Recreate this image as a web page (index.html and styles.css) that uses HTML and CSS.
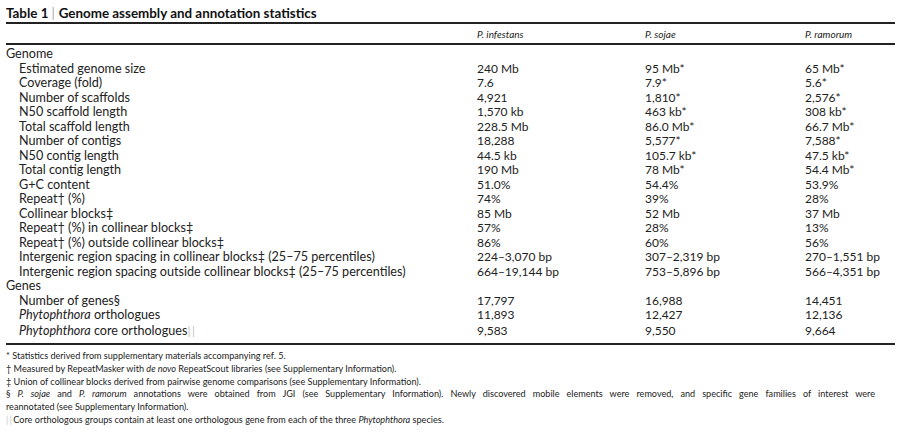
FILE: index.html
```html
<!DOCTYPE html>
<html>
<head>
<meta charset="utf-8">
<link rel="stylesheet" href="styles.css">
</head>
<body>
<div class="page">
  <h1 class="title">Table 1<span class="sep">|</span>Genome assembly and annotation statistics</h1>
  <table class="stats">
    <colgroup>
      <col class="c-label"><col class="c-a"><col class="c-b"><col class="c-c">
    </colgroup>
    <thead>
      <tr><th></th><th>P. infestans</th><th>P. sojae</th><th>P. ramorum</th></tr>
    </thead>
    <tbody>
      <tr class="group first"><td>Genome</td><td></td><td></td><td></td></tr>
      <tr><td class="sub">Estimated genome size</td><td>240 Mb</td><td>95 Mb*</td><td>65 Mb*</td></tr>
      <tr><td class="sub">Coverage (fold)</td><td>7.6</td><td>7.9*</td><td>5.6*</td></tr>
      <tr><td class="sub">Number of scaffolds</td><td>4,921</td><td>1,810*</td><td>2,576*</td></tr>
      <tr><td class="sub">N50 scaffold length</td><td>1,570 kb</td><td>463 kb*</td><td>308 kb*</td></tr>
      <tr><td class="sub">Total scaffold length</td><td>228.5 Mb</td><td>86.0 Mb*</td><td>66.7 Mb*</td></tr>
      <tr><td class="sub">Number of contigs</td><td>18,288</td><td>5,577*</td><td>7,588*</td></tr>
      <tr><td class="sub">N50 contig length</td><td>44.5 kb</td><td>105.7 kb*</td><td>47.5 kb*</td></tr>
      <tr><td class="sub">Total contig length</td><td>190 Mb</td><td>78 Mb*</td><td>54.4 Mb*</td></tr>
      <tr><td class="sub">G+C content</td><td>51.0%</td><td>54.4%</td><td>53.9%</td></tr>
      <tr><td class="sub">Repeat† (%)</td><td>74%</td><td>39%</td><td>28%</td></tr>
      <tr><td class="sub">Collinear blocks‡</td><td>85 Mb</td><td>52 Mb</td><td>37 Mb</td></tr>
      <tr><td class="sub">Repeat† (%) in collinear blocks‡</td><td>57%</td><td>28%</td><td>13%</td></tr>
      <tr><td class="sub">Repeat† (%) outside collinear blocks‡</td><td>86%</td><td>60%</td><td>56%</td></tr>
      <tr><td class="sub">Intergenic region spacing in collinear blocks‡ (25–75 percentiles)</td><td>224–3,070 bp</td><td>307–2,319 bp</td><td>270–1,551 bp</td></tr>
      <tr><td class="sub">Intergenic region spacing outside collinear blocks‡ (25–75 percentiles)</td><td>664–19,144 bp</td><td>753–5,896 bp</td><td>566–4,351 bp</td></tr>
      <tr class="group"><td>Genes</td><td></td><td></td><td></td></tr>
      <tr><td class="sub">Number of genes§</td><td>17,797</td><td>16,988</td><td>14,451</td></tr>
      <tr><td class="sub"><i>Phytophthora</i> orthologues</td><td>11,893</td><td>12,427</td><td>12,136</td></tr>
      <tr class="last"><td class="sub"><i>Phytophthora</i> core orthologues<span class="bars">||</span></td><td>9,583</td><td>9,550</td><td>9,664</td></tr>
    </tbody>
  </table>
  <div class="notes">
    <p>* Statistics derived from supplementary materials accompanying ref. 5.</p>
    <p>† Measured by RepeatMasker with <i>de novo</i> RepeatScout libraries (see Supplementary Information).</p>
    <p>‡ Union of collinear blocks derived from pairwise genome comparisons (see Supplementary Information).</p>
    <p><span class="just">§ <i>P. sojae</i> and <i>P. ramorum</i> annotations were obtained from JGI (see Supplementary Information).  Newly discovered mobile elements were removed, and specific gene families of interest were</span> reannotated (see Supplementary Information).</p>
    <p><span class="bars">||</span>Core orthologous groups contain at least one orthologous gene from each of the three <i>Phytophthora</i> species.</p>
  </div>
</div>
</body>
</html>
```

FILE: styles.css
```css
html, body {
  margin: 0;
  padding: 0;
  background: #ffffff;
}
body {
  font-family: Lato, "Open Sans", "Liberation Sans", sans-serif;
  color: #222222;
}
.page {
  padding: 5px 5px 0 6px;
  width: 889px;
}
.title {
  margin: 0;
  font-size: 13.4px;
  font-weight: 700;
  line-height: 17px;
  color: #111111;
  border-bottom: 2px solid #222222;
}
.title .sep {
  font-weight: 300;
  color: #555555;
  margin: 0 4px 0 3px;
}
.stats {
  width: 889px;
  border-collapse: collapse;
  table-layout: fixed;
  font-size: 12px;
}
.c-label { width: 471px; }
.c-a { width: 168px; }
.c-b { width: 160px; }
.c-c { width: 90px; }
.stats thead th {
  font-weight: 400;
  font-style: italic;
  font-size: 10px;
  text-align: left;
  height: 19px;
  padding: 0;
  border-bottom: 2px solid #222222;
}
.stats td {
  padding: 0;
  height: 14.5px;
  line-height: 14.5px;
  white-space: nowrap;
  vertical-align: middle;
}
.stats td:first-child {
  font-size: 12.6px;
}
.stats tr.first td {
  padding-top: 2px;
}
.stats tr.last td {
  padding-top: 1px;
  padding-bottom: 5px;
  border-bottom: 2px solid #222222;
}
.stats td.sub {
  padding-left: 13px;
}
.bars {
  color: #8a8a8a;
  letter-spacing: 1.5px;
  font-weight: 300;
}
.notes {
  width: 869px;
  padding-top: 5px;
  font-size: 9.1px;
  line-height: 12.8px;
}
.notes p {
  margin: 0;
}
.notes .just {
  display: block;
  text-align: justify;
  text-align-last: justify;
}
```
